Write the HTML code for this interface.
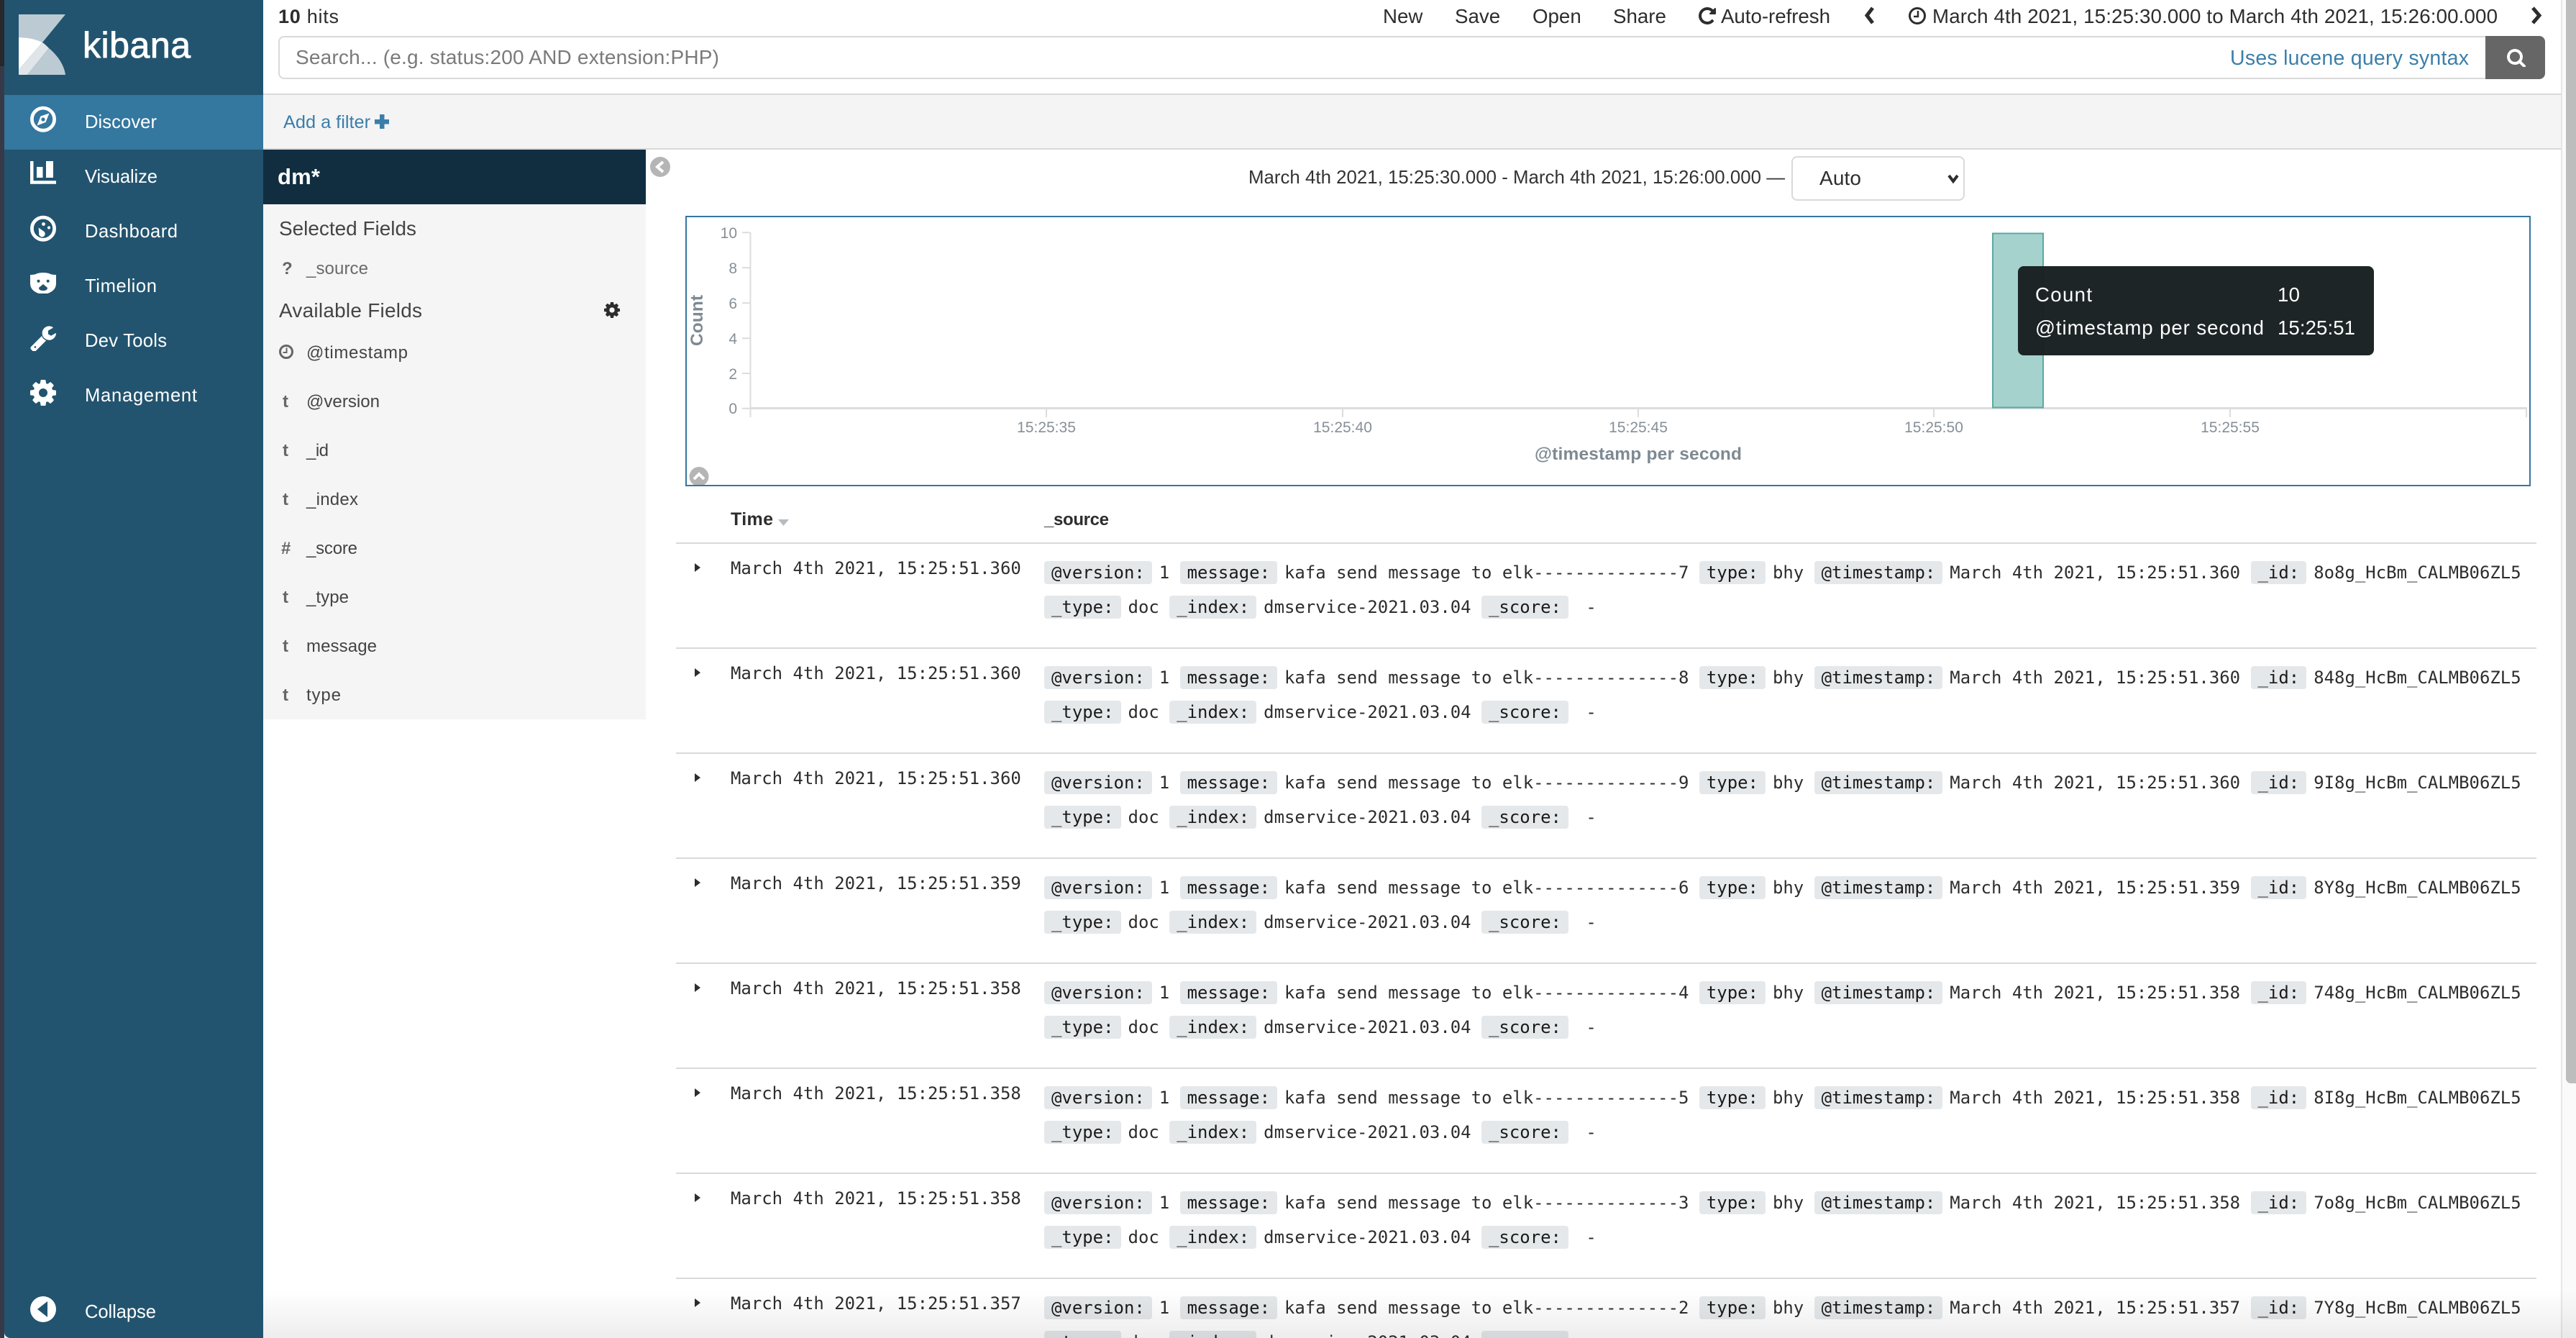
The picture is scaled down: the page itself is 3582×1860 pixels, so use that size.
<!DOCTYPE html>
<html lang="en">
<head>
<meta charset="utf-8">
<title>Discover - Kibana</title>
<style>
html,body{margin:0;padding:0;width:3582px;height:1860px;overflow:hidden;background:#fff;}
body{position:relative;font-family:"Liberation Sans",sans-serif;color:#2d2d2d;}
.abs{position:absolute;}
#strip{left:0;top:0;width:6px;height:1860px;background:#363a48;}
#strip2{left:0;top:0;width:6px;height:92px;background:#26282d;}
#nav{left:6px;top:0;width:360px;height:1860px;background:#22546f;border-bottom-left-radius:8px;}
#active{left:6px;top:132px;width:360px;height:76px;background:#34779f;}
#filterbar{left:366px;top:130px;width:3195px;background:#f4f4f4;border-top:2px solid #d9d9d9;border-bottom:2px solid #d9d9d9;box-sizing:content-box;height:74px;}
#indexbar{left:366px;top:208px;width:532px;height:76px;background:#112e40;}
#fields{left:366px;top:284px;width:532px;height:716px;background:#f5f5f5;}
#search{left:387px;top:50px;width:3069px;height:60px;box-sizing:border-box;border:2px solid #d9d9d9;border-right:none;border-radius:8px 0 0 8px;background:#fff;}
#searchbtn{left:3456px;top:50px;width:83px;height:60px;background:#666;border-radius:0 8px 8px 0;}
#select{left:2491px;top:217px;width:241px;height:62px;box-sizing:border-box;border:2px solid #d9d9d9;border-radius:8px;background:#fff;}
#chart{left:953px;top:300px;width:2566px;height:376px;box-sizing:border-box;border:2px solid #36779f;}
#scroll{left:3561px;top:0;width:21px;height:1860px;box-sizing:border-box;background:#fafafa;border-left:2px solid #e6e6e6;}
#thumb{left:3568px;top:0;width:14px;height:1506px;background:#bdbdbd;border-bottom-left-radius:7px;}
.row{position:absolute;left:940px;width:2587px;height:144px;border-top:2px solid #d9d9d9;font-family:"DejaVu Sans Mono","Liberation Mono",monospace;font-size:23.96px;color:#2d2d2d;}
.row .time,.row .l{position:absolute;white-space:pre;line-height:32px;height:32px;}
.row .time{left:76px;top:18px;}
.row .l{left:512px;}
.row .l1{top:24px;}
.row .l2{top:72px;}
.row .ar{position:absolute;left:26px;top:27px;width:0;height:0;border-left:8px solid #2d2d2d;border-top:6.5px solid transparent;border-bottom:6.5px solid transparent;}
.k{display:inline-block;height:32px;line-height:32px;padding:0 10px;margin-right:10px;background:#e5e8ea;border-radius:4px;color:#1a1a1a;}
#fade{left:366px;top:1793px;width:3216px;height:67px;background:linear-gradient(rgba(0,0,0,0),rgba(0,0,0,.07));pointer-events:none;}
#ov{position:absolute;left:0;top:0;}
#ov text{font-family:"Liberation Sans",sans-serif;white-space:pre;}
</style>
</head>
<body>
<div class="abs" id="strip"></div>
<div class="abs" id="strip2"></div>
<div class="abs" id="nav"></div>
<div class="abs" id="active"></div>
<div class="abs" id="search"></div>
<div class="abs" id="searchbtn"></div>
<div class="abs" id="filterbar"></div>
<div class="abs" id="indexbar"></div>
<div class="abs" id="fields"></div>
<div class="abs" id="select"></div>
<div class="abs" id="chart"></div>

<div class="row" style="top:754px"><i class="ar"></i><span class="time">March 4th 2021, 15:25:51.360</span>
<div class="l l1"><span class="k">@version:</span>1 <span class="k">message:</span>kafa send message to elk--------------7 <span class="k">type:</span>bhy <span class="k">@timestamp:</span>March 4th 2021, 15:25:51.360 <span class="k">_id:</span>8o8g_HcBm_CALMB06ZL5</div>
<div class="l l2"><span class="k">_type:</span>doc <span class="k">_index:</span>dmservice-2021.03.04 <span class="k">_score:</span> -</div></div>

<div class="row" style="top:900px"><i class="ar"></i><span class="time">March 4th 2021, 15:25:51.360</span>
<div class="l l1"><span class="k">@version:</span>1 <span class="k">message:</span>kafa send message to elk--------------8 <span class="k">type:</span>bhy <span class="k">@timestamp:</span>March 4th 2021, 15:25:51.360 <span class="k">_id:</span>848g_HcBm_CALMB06ZL5</div>
<div class="l l2"><span class="k">_type:</span>doc <span class="k">_index:</span>dmservice-2021.03.04 <span class="k">_score:</span> -</div></div>

<div class="row" style="top:1046px"><i class="ar"></i><span class="time">March 4th 2021, 15:25:51.360</span>
<div class="l l1"><span class="k">@version:</span>1 <span class="k">message:</span>kafa send message to elk--------------9 <span class="k">type:</span>bhy <span class="k">@timestamp:</span>March 4th 2021, 15:25:51.360 <span class="k">_id:</span>9I8g_HcBm_CALMB06ZL5</div>
<div class="l l2"><span class="k">_type:</span>doc <span class="k">_index:</span>dmservice-2021.03.04 <span class="k">_score:</span> -</div></div>

<div class="row" style="top:1192px"><i class="ar"></i><span class="time">March 4th 2021, 15:25:51.359</span>
<div class="l l1"><span class="k">@version:</span>1 <span class="k">message:</span>kafa send message to elk--------------6 <span class="k">type:</span>bhy <span class="k">@timestamp:</span>March 4th 2021, 15:25:51.359 <span class="k">_id:</span>8Y8g_HcBm_CALMB06ZL5</div>
<div class="l l2"><span class="k">_type:</span>doc <span class="k">_index:</span>dmservice-2021.03.04 <span class="k">_score:</span> -</div></div>

<div class="row" style="top:1338px"><i class="ar"></i><span class="time">March 4th 2021, 15:25:51.358</span>
<div class="l l1"><span class="k">@version:</span>1 <span class="k">message:</span>kafa send message to elk--------------4 <span class="k">type:</span>bhy <span class="k">@timestamp:</span>March 4th 2021, 15:25:51.358 <span class="k">_id:</span>748g_HcBm_CALMB06ZL5</div>
<div class="l l2"><span class="k">_type:</span>doc <span class="k">_index:</span>dmservice-2021.03.04 <span class="k">_score:</span> -</div></div>

<div class="row" style="top:1484px"><i class="ar"></i><span class="time">March 4th 2021, 15:25:51.358</span>
<div class="l l1"><span class="k">@version:</span>1 <span class="k">message:</span>kafa send message to elk--------------5 <span class="k">type:</span>bhy <span class="k">@timestamp:</span>March 4th 2021, 15:25:51.358 <span class="k">_id:</span>8I8g_HcBm_CALMB06ZL5</div>
<div class="l l2"><span class="k">_type:</span>doc <span class="k">_index:</span>dmservice-2021.03.04 <span class="k">_score:</span> -</div></div>

<div class="row" style="top:1630px"><i class="ar"></i><span class="time">March 4th 2021, 15:25:51.358</span>
<div class="l l1"><span class="k">@version:</span>1 <span class="k">message:</span>kafa send message to elk--------------3 <span class="k">type:</span>bhy <span class="k">@timestamp:</span>March 4th 2021, 15:25:51.358 <span class="k">_id:</span>7o8g_HcBm_CALMB06ZL5</div>
<div class="l l2"><span class="k">_type:</span>doc <span class="k">_index:</span>dmservice-2021.03.04 <span class="k">_score:</span> -</div></div>

<div class="row" style="top:1776px"><i class="ar"></i><span class="time">March 4th 2021, 15:25:51.357</span>
<div class="l l1"><span class="k">@version:</span>1 <span class="k">message:</span>kafa send message to elk--------------2 <span class="k">type:</span>bhy <span class="k">@timestamp:</span>March 4th 2021, 15:25:51.357 <span class="k">_id:</span>7Y8g_HcBm_CALMB06ZL5</div>
<div class="l l2"><span class="k">_type:</span>doc <span class="k">_index:</span>dmservice-2021.03.04 <span class="k">_score:</span> -</div></div>

<svg id="ov" width="3582" height="1860" viewBox="0 0 3582 1860" xmlns="http://www.w3.org/2000/svg">
  <!-- logo -->
  <path d="M26 20H91L59 59C49 54 38 52 26 52Z" fill="#bccbd3"/>
  <path d="M26 52C38 52 49 54 59 59L26 97Z" fill="#fff"/>
  <path d="M59 59C62 61 65 64 68 67L38 104H26V97Z" fill="#dfe5e8"/>
  <path d="M68 67C80 77 89 90 91 104H38Z" fill="#bccbd3"/>
  <text x="115" y="80" font-size="50" fill="#fff" stroke="#fff" stroke-width=".9" textLength="150">kibana</text>

  <!-- nav labels -->
  <g font-size="25.6" fill="#fff">
    <text x="118" y="178" textLength="100">Discover</text>
    <text x="118" y="254" textLength="101">Visualize</text>
    <text x="118" y="330" textLength="129">Dashboard</text>
    <text x="118" y="406" textLength="100">Timelion</text>
    <text x="118" y="482" textLength="114">Dev Tools</text>
    <text x="118" y="558" textLength="156">Management</text>
    <text x="118" y="1832" textLength="99">Collapse</text>
  </g>

  <!-- discover icon -->
  <circle cx="60" cy="165.7" r="15.6" fill="none" stroke="#fff" stroke-width="4.8"/>
  <path d="M68.5 157.5L63.5 170L51.5 174.5L56.5 161.5Z" fill="#fff"/>
  <circle cx="60" cy="166" r="2.6" fill="#34779f"/>
  <!-- visualize icon -->
  <path d="M42 224H46.5V251.2H78V255.7H42Z" fill="#fff"/>
  <rect x="51" y="232" width="8.5" height="15" fill="#fff"/>
  <rect x="64" y="224" width="10" height="23" fill="#fff"/>
  <!-- dashboard icon -->
  <circle cx="60" cy="317.7" r="15.6" fill="none" stroke="#fff" stroke-width="4.8"/>
  <circle cx="60.5" cy="311.5" r="2.4" fill="#fff"/>
  <circle cx="68" cy="316.5" r="2.1" fill="#fff"/>
  <path d="M53.500 316.500L60.800 321.500A4.300 4.300 0 1 1 54.300 323.800Z" fill="#fff"/>
  <!-- timelion icon -->
  <path d="M42 382Q49 382 52 380Q60 378 68 380Q71 382 78 382V394Q78 404 66 408H54Q42 404 42 394Z" fill="#fff"/>
  <circle cx="53.5" cy="390.7" r="2" fill="#22546f"/>
  <circle cx="66.7" cy="390.7" r="2" fill="#22546f"/>
  <path d="M60 395L66 400Q66 404 60 404Q54 404 54 400Z" fill="#22546f"/>
  <!-- wrench icon -->
  <svg x="42" y="452" width="36" height="36" viewBox="64 64 1664 1664"><path fill="#fff" d="M448 1472q0-26-19-45t-45-19-45 19-19 45 19 45 45 19 45-19 19-45zm644-420l-682 682q-37 37-90 37-52 0-91-37l-106-108q-38-36-38-90 0-53 38-91l681-681q39 98 114.5 173.5t173.5 114.5zm634-435q0 39-23 106-47 134-164.5 217.5t-258.5 83.5q-185 0-316.5-131.5t-131.5-316.5 131.5-316.5 316.5-131.5q58 0 121.5 16.5t107.5 46.5q16 11 16 28t-16 28l-293 169v224l193 106q5-3 79-48.5t135.5-81 70.5-35.5q15 0 23.5 10t8.5 25z"/></svg>
  <!-- gear icon -->
  <svg x="42" y="528" width="36" height="36" viewBox="128 128 1536 1536"><path fill="#fff" d="M1152 896q0-106-75-181t-181-75-181 75-75 181 75 181 181 75 181-75 75-181zm512-109v222q0 12-8 23t-20 13l-185 28q-19 54-39 91 35 50 107 138 10 12 10 25t-9 23q-27 37-99 108t-94 71q-12 0-26-9l-138-108q-44 23-91 38-16 136-29 186-7 28-36 28h-222q-14 0-24.5-8.5t-11.5-21.5l-28-184q-49-16-90-37l-141 107q-10 9-25 9-14 0-25-11-126-114-165-168-7-10-7-23 0-12 8-23 15-21 51-66.5t54-70.5q-27-50-41-99l-183-27q-13-2-21-12.5t-8-23.5v-222q0-12 8-23t19-13l186-28q14-46 39-92-40-57-107-138-10-12-10-24 0-10 9-23 26-36 98.5-107.5t94.5-71.5q13 0 26 10l138 107q44-23 91-38 16-136 29-186 7-28 36-28h222q14 0 24.5 8.5t11.5 21.5l28 184q49 16 90 37l142-107q9-9 24-9 13 0 25 10 129 119 165 170 7 8 7 22 0 12-8 23-15 21-51 66.5t-54 70.5q26 50 41 98l183 28q13 2 21 12.5t8 23.5z"/></svg>
  <!-- collapse icon -->
  <circle cx="60" cy="1820" r="18" fill="#fff"/>
  <path d="M66 1809V1831L52 1820Z" fill="#22546f"/>

  <!-- top bar -->
  <text x="387" y="32" font-size="27" fill="#2d2d2d" textLength="84"><tspan font-weight="bold">10</tspan> hits</text>
  <text x="411" y="89" font-size="28" fill="#7a7a7a" textLength="589">Search... (e.g. status:200 AND extension:PHP)</text>
  <text x="3101" y="90" font-size="28.5" fill="#3c7fa8" textLength="332">Uses lucene query syntax</text>
  <svg x="3486" y="67" width="26" height="26" viewBox="64 64 1664 1664"><path fill="#fff" d="M1216 832q0-185-131.5-316.5t-316.5-131.5-316.5 131.5-131.5 316.5 131.5 316.5 316.5 131.5 316.5-131.5 131.5-316.5zm512 832q0 52-38 90t-90 38q-54 0-90-38l-343-342q-179 124-399 124-143 0-273.5-55.5t-225-150-150-225-55.5-273.5 55.5-273.5 150-225 225-150 273.5-55.5 273.5 55.5 225 150 150 225 55.5 273.5q0 220-124 399l343 343q37 37 37 90z"/></svg>
  <g font-size="27.7" fill="#2d2d2d">
    <text x="1923" y="32">New</text>
    <text x="2023" y="32">Save</text>
    <text x="2131" y="32">Open</text>
    <text x="2243" y="32">Share</text>
    <text x="2393" y="32" textLength="152">Auto-refresh</text>
    <text x="2687" y="32" textLength="786">March 4th 2021, 15:25:30.000 to March 4th 2021, 15:26:00.000</text>
  </g>
  <svg x="2362" y="10" width="24" height="24" viewBox="128 128 1536 1536"><path fill="#2d2d2d" d="M1664 256v448q0 26-19 45t-45 19h-448q-42 0-59-40-17-39 14-69l138-138q-148-137-349-137-104 0-198.5 40.5t-163.5 109.5-109.5 163.5-40.5 198.5 40.5 198.5 109.5 163.5 163.5 109.5 198.5 40.5q119 0 225-52t179-147q7-10 23-12 15 0 25 9l137 138q9 8 9.5 20.5t-7.5 22.5q-109 132-264 204.5t-327 72.5q-156 0-298-61t-245-164-164-245-61-298 61-298 164-245 245-164 298-61q147 0 284.5 55.5t244.5 156.5l130-129q29-31 70-14 39 17 39 59z"/></svg>
  <path d="M2604 11L2596 21.5L2604 32" fill="none" stroke="#2d2d2d" stroke-width="5"/>
  <path d="M3522 11L3531 21.5L3522 32" fill="none" stroke="#2d2d2d" stroke-width="5"/>
  <circle cx="2666" cy="22" r="10.500" fill="none" stroke="#2d2d2d" stroke-width="3"/>
  <path d="M2667 15V23H2661" fill="none" stroke="#2d2d2d" stroke-width="2.5"/>

  <!-- filter bar -->
  <text x="394" y="178" font-size="25.3" fill="#3b7eaa" textLength="121">Add a filter</text>
  <path d="M528 159H534.500V166H541V172.500H534.500V179H528V172.500H521V166H528Z" fill="#3b7eaa"/>

  <!-- field panel -->
  <text x="386" y="256" font-size="31" font-weight="bold" fill="#fff" textLength="59">dm*</text>
  <g font-size="27.9" fill="#444">
    <text x="388" y="327" textLength="191">Selected Fields</text>
    <text x="388" y="441" textLength="199">Available Fields</text>
  </g>
  <svg x="840" y="420" width="22" height="22" viewBox="128 128 1536 1536"><path fill="#2d2d2d" d="M1152 896q0-106-75-181t-181-75-181 75-75 181 75 181 181 75 181-75 75-181zm512-109v222q0 12-8 23t-20 13l-185 28q-19 54-39 91 35 50 107 138 10 12 10 25t-9 23q-27 37-99 108t-94 71q-12 0-26-9l-138-108q-44 23-91 38-16 136-29 186-7 28-36 28h-222q-14 0-24.5-8.5t-11.5-21.5l-28-184q-49-16-90-37l-141 107q-10 9-25 9-14 0-25-11-126-114-165-168-7-10-7-23 0-12 8-23 15-21 51-66.5t54-70.5q-27-50-41-99l-183-27q-13-2-21-12.5t-8-23.5v-222q0-12 8-23t19-13l186-28q14-46 39-92-40-57-107-138-10-12-10-24 0-10 9-23 26-36 98.5-107.5t94.5-71.5q13 0 26 10l138 107q44-23 91-38 16-136 29-186 7-28 36-28h222q14 0 24.5 8.5t11.5 21.5l28 184q49 16 90 37l142-107q9-9 24-9 13 0 25 10 129 119 165 170 7 8 7 22 0 12-8 23-15 21-51 66.5t-54 70.5q26 50 41 98l183 28q13 2 21 12.5t8 23.5z"/></svg>
  <text x="426" y="381" font-size="24" fill="#6a6a6a" textLength="86">_source</text>
  <g font-size="24" fill="#444">
    <text x="426" y="498" textLength="141">@timestamp</text>
    <text x="426" y="566" textLength="102">@version</text>
    <text x="426" y="634" textLength="31">_id</text>
    <text x="426" y="702" textLength="72">_index</text>
    <text x="426" y="770" textLength="71">_score</text>
    <text x="426" y="838" textLength="59">_type</text>
    <text x="426" y="906" textLength="98">message</text>
    <text x="426" y="974" textLength="48">type</text>
  </g>
  <g font-size="24" font-weight="bold" fill="#666">
    <text x="392" y="381">?</text>
    <text x="393" y="566">t</text>
    <text x="393" y="634">t</text>
    <text x="393" y="702">t</text>
    <text x="391" y="770">#</text>
    <text x="393" y="838">t</text>
    <text x="393" y="906">t</text>
    <text x="393" y="974">t</text>
  </g>
  <circle cx="398" cy="489" r="8.500" fill="none" stroke="#666" stroke-width="3"/>
  <path d="M398.500 483.500V490H393.500" fill="none" stroke="#666" stroke-width="2"/>

  <!-- collapse toggler -->
  <circle cx="918" cy="232" r="14" fill="#b5b5b5"/>
  <path d="M922 225L914 232L922 239" fill="none" stroke="#fff" stroke-width="4"/>

  <!-- histogram header -->
  <text x="1736" y="255" font-size="25.800" fill="#333" textLength="746">March 4th 2021, 15:25:30.000 - March 4th 2021, 15:26:00.000 —</text>
  <text x="2530" y="257" font-size="28" fill="#2d2d2d" textLength="58">Auto</text>
  <path d="M2710 244L2716 252L2722 244" fill="none" stroke="#2d2d2d" stroke-width="4"/>

  <!-- chart -->
  <g stroke="#dcdcdc" stroke-width="2" fill="none">
    <path d="M1043.500 323V580"/>
    <path d="M1032 323.300H1043M1032 372.300H1043M1032 421.300H1043M1032 470.200H1043M1032 519H1043M1032 567.700H1043"/>
    <path d="M1455 567V580M1867 567V580M2278 567V580M2689 567V580M3101 567V580M3513 567V580"/>
  </g>
  <path d="M1043 567.500H3514" stroke="#dcdcdc" stroke-width="3"/>
  <rect x="2771" y="324.500" width="70" height="242" fill="#a6d2ce" stroke="#5aa9a2" stroke-width="2"/>
  <g font-size="21" fill="#868f97" text-anchor="end">
    <text x="1025" y="331">10</text>
    <text x="1025" y="380">8</text>
    <text x="1025" y="429">6</text>
    <text x="1025" y="478">4</text>
    <text x="1025" y="527">2</text>
    <text x="1025" y="575">0</text>
  </g>
  <g font-size="21" fill="#868f97" text-anchor="middle">
    <text x="1455" y="601">15:25:35</text>
    <text x="1867" y="601">15:25:40</text>
    <text x="2278" y="601">15:25:45</text>
    <text x="2689" y="601">15:25:50</text>
    <text x="3101" y="601">15:25:55</text>
  </g>
  <text transform="translate(977 481) rotate(-90)" font-size="24.500" font-weight="bold" fill="#7e8992" textLength="71">Count</text>
  <text x="2134" y="639" font-size="24.500" font-weight="bold" fill="#7e8992" textLength="288">@timestamp per second</text>
  <rect x="2806" y="370" width="495" height="124" rx="8" fill="#1a2123" fill-opacity=".98"/>
  <g font-size="27.600" fill="#fff">
    <text x="2830" y="419" textLength="79">Count</text>
    <text x="3167" y="419" textLength="31">10</text>
    <text x="2830" y="465" textLength="318">@timestamp per second</text>
    <text x="3167" y="465" textLength="108">15:25:51</text>
  </g>
  <circle cx="972" cy="662.500" r="13.500" fill="#b5b5b5"/>
  <path d="M965 666L972 659L979 666" fill="none" stroke="#fff" stroke-width="4"/>
  <rect x="953" y="674" width="40" height="2" fill="#36779f"/>

  <!-- table header -->
  <text x="1016" y="730" font-size="25" font-weight="bold" fill="#2d2d2d" textLength="59">Time</text>
  <path d="M1082 722H1097L1089.500 731Z" fill="#b5bcc2"/>
  <text x="1452" y="730" font-size="24" font-weight="bold" fill="#2d2d2d" textLength="90">_source</text>
</svg>

<div class="abs" id="scroll"></div>
<div class="abs" id="thumb"></div>
<div class="abs" id="fade"></div>
</body>
</html>
